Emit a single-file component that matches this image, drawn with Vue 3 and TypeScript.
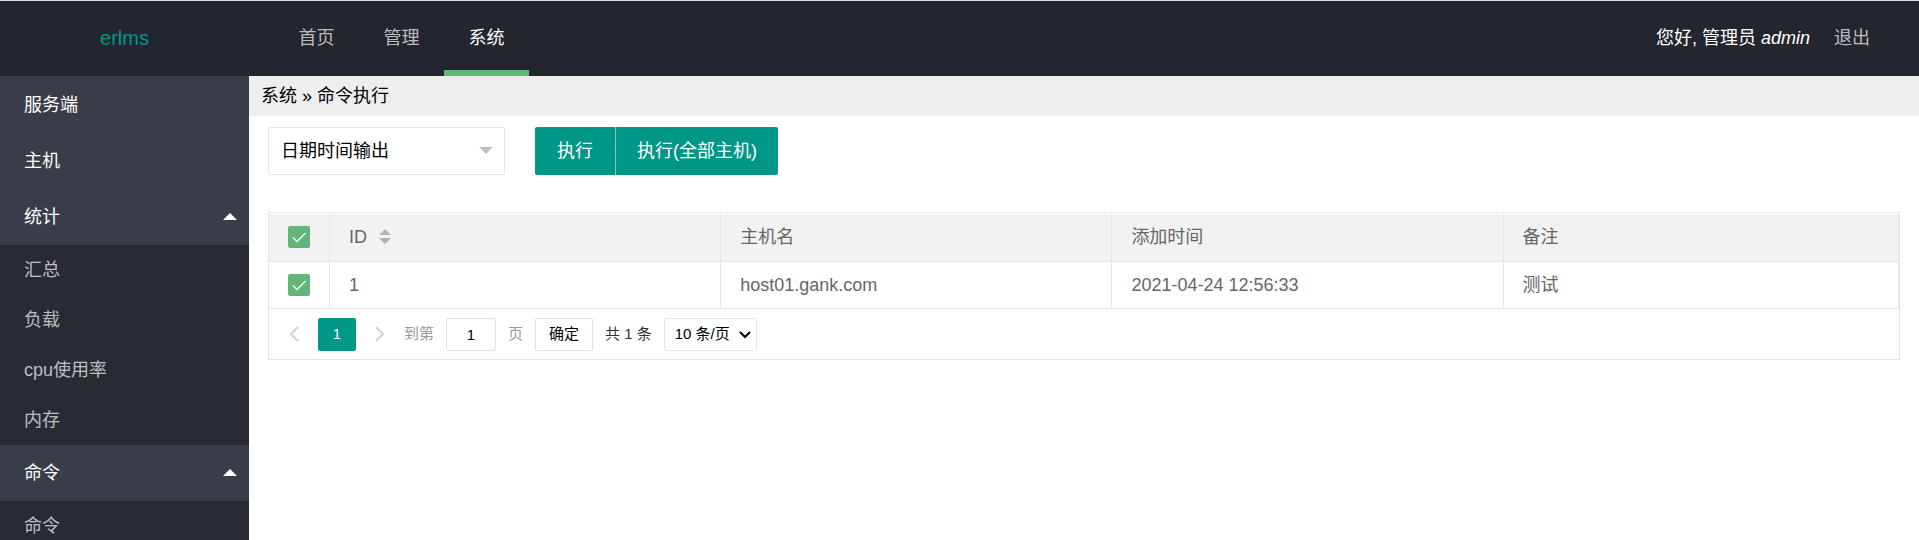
<script setup lang="ts">
import { computed, ref } from 'vue'

interface MenuGroup {
  title: string
  children?: string[]
}

interface Host {
  id: number
  name: string
  created: string
  remark: string
  checked: boolean
}

const tabs = ['首页', '管理', '系统']
const activeTab = ref('系统')

const menu: MenuGroup[] = [
  { title: '服务端' },
  { title: '主机' },
  { title: '统计', children: ['汇总', '负载', 'cpu使用率', '内存'] },
  { title: '命令', children: ['命令'] },
]

const hosts = ref<Host[]>([
  { id: 1, name: 'host01.gank.com', created: '2021-04-24 12:56:33', remark: '测试', checked: true },
])

const allChecked = computed({
  get: () => hosts.value.every((h) => h.checked),
  set: (value: boolean) => hosts.value.forEach((h) => (h.checked = value)),
})

const command = ref('日期时间输出')
const targetPage = ref('1')
const pageSize = ref(10)
</script>

<template>
  <div class="layout">
    <header class="header">
      <a class="logo" href="#">erlms</a>
      <nav class="tabs">
        <a
          v-for="tab in tabs"
          :key="tab"
          href="#"
          class="tab"
          :class="{ active: tab === activeTab }"
          @click.prevent="activeTab = tab"
        >{{ tab }}</a>
      </nav>
      <div class="user">
        <span class="hello">您好, 管理员 <em>admin</em></span>
        <a class="logout" href="#">退出</a>
      </div>
    </header>

    <div class="body">
      <aside class="sidebar">
        <div v-for="group in menu" :key="group.title">
          <a class="group" href="#">
            {{ group.title }}
            <svg v-if="group.children" class="caret" viewBox="0 0 14 7" aria-hidden="true">
              <path d="M7 0 14 7H0Z" />
            </svg>
          </a>
          <div v-if="group.children" class="children">
            <a v-for="item in group.children" :key="item" class="child" href="#">{{ item }}</a>
          </div>
        </div>
      </aside>

      <main class="main">
        <div class="crumbs">系统 » 命令执行</div>

        <div class="content">
          <form class="toolbar" @submit.prevent>
            <div class="command">
              <select v-model="command" aria-label="命令">
                <option>日期时间输出</option>
              </select>
              <svg viewBox="0 0 14 7" aria-hidden="true"><path d="M0 0H14L7 7Z" /></svg>
            </div>
            <div class="actions">
              <button type="button">执行</button>
              <button type="button">执行(全部主机)</button>
            </div>
          </form>

          <section class="panel">
            <table class="hosts">
              <colgroup>
                <col class="col-check" />
                <col class="col-data" />
                <col class="col-data" />
                <col class="col-data" />
                <col />
              </colgroup>
              <thead>
                <tr>
                  <th>
                    <label class="check">
                      <input v-model="allChecked" type="checkbox" aria-label="全选" />
                      <svg viewBox="0 0 22 22" aria-hidden="true"><path d="M5 11.5 9 15.5 17.5 7" /></svg>
                    </label>
                  </th>
                  <th>
                    <span class="sortable">
                      ID
                      <svg viewBox="0 0 12 16" aria-hidden="true">
                        <path d="M6 0 12 6H0ZM0 9H12L6 15Z" />
                      </svg>
                    </span>
                  </th>
                  <th>主机名</th>
                  <th>添加时间</th>
                  <th>备注</th>
                </tr>
              </thead>
              <tbody>
                <tr v-for="host in hosts" :key="host.id">
                  <td>
                    <label class="check">
                      <input v-model="host.checked" type="checkbox" :aria-label="host.name" />
                      <svg viewBox="0 0 22 22" aria-hidden="true"><path d="M5 11.5 9 15.5 17.5 7" /></svg>
                    </label>
                  </td>
                  <td>{{ host.id }}</td>
                  <td>{{ host.name }}</td>
                  <td>{{ host.created }}</td>
                  <td>{{ host.remark }}</td>
                </tr>
              </tbody>
            </table>

            <div class="pager">
              <button type="button" class="step" aria-label="上一页" disabled>
                <svg viewBox="0 0 10 16" aria-hidden="true"><path d="M9 1 2 8 9 15" /></svg>
              </button>
              <button type="button" class="current">1</button>
              <button type="button" class="step" aria-label="下一页" disabled>
                <svg viewBox="0 0 10 16" aria-hidden="true"><path d="M1 1 8 8 1 15" /></svg>
              </button>
              <label class="jump">
                到第
                <input v-model="targetPage" type="text" />
                页
              </label>
              <button type="button" class="confirm">确定</button>
              <span class="total">共 1 条</span>
              <div class="size">
                <select v-model="pageSize" aria-label="每页条数">
                  <option :value="10">10 条/页</option>
                  <option :value="20">20 条/页</option>
                </select>
                <svg viewBox="0 0 12 8" aria-hidden="true"><path d="M1 1 6 6 11 1" /></svg>
              </div>
            </div>
          </section>
        </div>
      </main>
    </div>
  </div>
</template>

<style>
body {
  margin: 0;
  background: #fff;
}
</style>

<style scoped>
.layout {
  display: flex;
  flex-direction: column;
  height: 100vh;
  overflow: hidden;
  color: #000;
  font-family: "Liberation Sans", "Noto Sans CJK SC", sans-serif;
  font-size: 18px;
  line-height: 24px;
}

.layout *,
.layout *::before {
  box-sizing: border-box;
}

a {
  color: inherit;
  text-decoration: none;
}

button,
input,
select {
  margin: 0;
  font: inherit;
  color: inherit;
}

.header {
  display: flex;
  flex: none;
  height: 76px;
  border-top: 1px solid #d9dde0;
  background: #23262e;
  color: rgba(255, 255, 255, 0.7);
}

.logo {
  width: 249px;
  color: #009688;
  font-size: 20px;
  line-height: 75px;
  text-align: center;
}

.tabs {
  display: flex;
  margin-left: 25px;
}

.tab {
  width: 85px;
  border-bottom: 6px solid transparent;
  line-height: 74px;
  text-align: center;
}

.tab.active {
  border-color: #5fb878;
  color: #fff;
}

.user {
  display: flex;
  gap: 24px;
  margin-left: auto;
  padding-right: 49px;
  line-height: 74px;
}

.hello {
  color: #fff;
}

.body {
  display: flex;
  flex: 1;
  min-height: 0;
}

.sidebar {
  flex: none;
  width: 249px;
  padding-top: 1px;
  overflow: hidden;
  background: #393d49;
}

.group {
  display: flex;
  align-items: center;
  justify-content: space-between;
  height: 56px;
  padding: 0 12px 1px 24px;
  color: #fff;
}

.caret {
  width: 14px;
  height: 7px;
  fill: #fff;
}

.children {
  background: #282b33;
}

.child {
  display: block;
  padding-left: 24px;
  color: rgba(255, 255, 255, 0.7);
  line-height: 50px;
}

.main {
  flex: 1;
  min-width: 0;
}

.crumbs {
  height: 40px;
  padding-left: 12px;
  background: #eee;
  line-height: 40px;
}

.content {
  padding: 11px 19px;
}

.toolbar {
  display: flex;
  gap: 30px;
  height: 48px;
}

.command,
.size {
  position: relative;
}

.command {
  width: 237px;
}

select {
  width: 100%;
  height: 100%;
  border: 1px solid #e6e6e6;
  border-radius: 2px;
  background: #fff;
  appearance: none;
}

.command select {
  padding: 0 36px 0 12px;
}

.command svg {
  position: absolute;
  top: 20px;
  right: 12px;
  width: 14px;
  height: 7px;
  fill: #c2c2c2;
  pointer-events: none;
}

.actions {
  display: flex;
}

.actions button {
  padding: 0 22px;
  border: 0;
  background: #009688;
  color: #fff;
}

.actions button:first-child {
  border-radius: 2px 0 0 2px;
}

.actions button:last-child {
  padding: 0 21px;
  border-left: 1px solid rgba(255, 255, 255, 0.5);
  border-radius: 0 2px 2px 0;
}

.panel {
  margin-top: 37px;
  padding-top: 1px;
  border: 1px solid #e6e6e6;
}

.hosts {
  width: 100%;
  border-collapse: separate;
  border-spacing: 0;
  table-layout: fixed;
  color: #666;
}

.col-check {
  width: 61px;
}

.col-data {
  width: 24%;
}

th,
td {
  height: 47px;
  padding: 0 19px;
  border: solid #e6e6e6;
  border-width: 0 1px 1px 0;
  font-weight: 400;
  text-align: left;
}

th {
  height: 48px;
  padding-bottom: 2px;
  background: #f2f2f2;
}

.check {
  position: relative;
  display: block;
  width: 22px;
  height: 22px;
}

.check input {
  display: block;
  width: 22px;
  height: 22px;
  border: 1px solid #d2d2d2;
  border-radius: 2px;
  background: #fff;
  appearance: none;
}

.check input:checked {
  border-color: #5fb878;
  background: #5fb878;
}

.check svg {
  position: absolute;
  inset: 0;
  fill: none;
  stroke: #fff;
  stroke-width: 1.4;
  pointer-events: none;
}

.sortable {
  display: flex;
  align-items: center;
  gap: 12px;
}

.sortable svg {
  width: 12px;
  height: 16px;
  fill: #b2b2b2;
}

.pager {
  display: flex;
  align-items: center;
  height: 50px;
  padding-left: 1px;
  font-size: 15px;
}

.pager button,
.pager input,
.size {
  height: 33px;
}

.step {
  display: flex;
  align-items: center;
  justify-content: center;
  width: 48px;
  padding: 0;
  border: 0;
  background: none;
}

.step svg {
  width: 10px;
  height: 16px;
  fill: none;
  stroke: #d2d2d2;
  stroke-width: 2;
}

.current {
  width: 38px;
  padding: 0;
  border: 0;
  border-radius: 2px;
  background: #009688;
  color: #fff;
}

.jump {
  display: flex;
  align-items: center;
  gap: 12px;
  color: #999;
}

.jump input {
  width: 50px;
  padding: 0;
  border: 1px solid #e2e2e2;
  border-radius: 2px;
  color: #000;
  text-align: center;
}

.confirm {
  width: 58px;
  margin: 0 12px;
  padding: 0;
  border: 1px solid #e2e2e2;
  border-radius: 2px;
  background: #fff;
}

.total {
  margin-right: 12px;
  color: #333;
}

.size {
  width: 93px;
}

.size select {
  padding: 0 0 0 10px;
}

.size svg {
  position: absolute;
  top: 13px;
  right: 6px;
  width: 12px;
  height: 8px;
  fill: none;
  stroke: #000;
  stroke-width: 2;
  pointer-events: none;
}
</style>
